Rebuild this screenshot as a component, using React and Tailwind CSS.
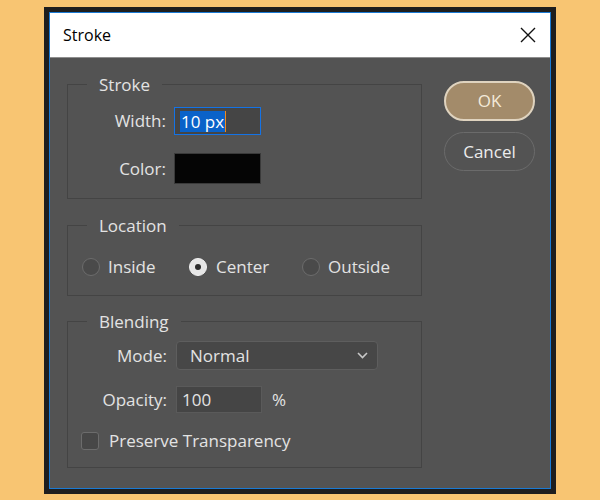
import React from 'react';

const font = { fontFamily: '"Open Sans", "Noto Sans", sans-serif' };

function Radio({ checked }) {
  return checked ? (
    <span className="flex items-center justify-center w-[18px] h-[18px] rounded-full bg-[#e6e6e6] border border-[#f2f2f2]">
      <span className="w-[6px] h-[6px] rounded-full bg-[#2b2b2b]" />
    </span>
  ) : (
    <span className="w-[18px] h-[18px] rounded-full bg-[#4a4a4a] border-[1.5px] border-[#6c6c6c]" />
  );
}

export default function App() {
  return (
    <div className="w-[600px] h-[500px] bg-[#f8c572] pt-[7px] pl-[44px]" style={font}>
      {/* Dialog */}
      <div className="w-[512px] h-[487px] border-[5px] border-[#1e1e1e]">
        <div className="w-full h-full border border-[#1a7ad4] bg-[#535353] flex flex-col">
          {/* Title bar */}
          <div className="h-[45px] bg-white border-b border-[#8e8e8e] flex items-center justify-between pl-[13px] pr-[13px]">
            <span className="text-[16px] text-black leading-5">Stroke</span>
            <svg width="16" height="16" viewBox="0 0 16 16" className="mr-[1px]">
              <path d="M1 1 L15 15 M15 1 L1 15" stroke="#111" strokeWidth="1.4" fill="none" />
            </svg>
          </div>

          {/* Body */}
          <div className="flex flex-1 text-[#e3e3e3] text-[17px] leading-5">
            <div className="pl-[17px] pt-[15px] flex flex-col">
              {/* Stroke */}
              <fieldset className="w-[355px] border border-[#444444]">
                <legend className="ml-[19px] px-3 leading-5 pt-[2px]">Stroke</legend>
                <div className="h-[103px] pt-[12px] flex flex-col">
                  <div className="flex items-center h-[28px]">
                    <span className="w-[98px] text-right">Width:</span>
                    <div className="ml-[8px] w-[87px] h-[28px] border border-[#1473e6] bg-[#454545] flex items-center pl-[5px]">
                      <span className="bg-[#0a62c9] text-white px-[1px] leading-[21px]">10 px</span>
                      <span className="w-[1px] h-[21px] bg-[#f08a1c]" />
                    </div>
                  </div>
                  <div className="flex items-center h-[31px] mt-[18px]">
                    <span className="w-[98px] text-right">Color:</span>
                    <div className="ml-[8px] w-[87px] h-[31px] border border-[#3a3a3a] bg-[#050505]" />
                  </div>
                </div>
              </fieldset>

              {/* Location */}
              <fieldset className="w-[355px] border border-[#444444] mt-[15px]">
                <legend className="ml-[19px] px-3 leading-5 pt-[2px]">Location</legend>
                <div className="h-[59px] pt-[21px] pl-[14px] flex">
                  <div className="w-[107px] h-[20px] flex items-center gap-[8px]">
                    <Radio />
                    <span>Inside</span>
                  </div>
                  <div className="w-[113px] h-[20px] flex items-center gap-[9px]">
                    <Radio checked />
                    <span>Center</span>
                  </div>
                  <div className="h-[20px] flex items-center gap-[8px]">
                    <Radio />
                    <span>Outside</span>
                  </div>
                </div>
              </fieldset>

              {/* Blending */}
              <fieldset className="w-[355px] border border-[#444444] mt-[14px]">
                <legend className="ml-[19px] px-3 leading-5 pt-[2px]">Blending</legend>
                <div className="h-[135px] pt-[9px] flex flex-col">
                  <div className="flex items-center h-[29px]">
                    <span className="w-[99px] text-right">Mode:</span>
                    <div className="ml-[9px] w-[202px] h-[29px] rounded-[4px] border border-[#5e5e5e] bg-[#474747] flex items-center justify-between pl-[13px] pr-[9px]">
                      <span>Normal</span>
                      <svg width="11" height="7" viewBox="0 0 11 7">
                        <path d="M1 1 L5.5 5.5 L10 1" stroke="#c8c8c8" strokeWidth="1.6" fill="none" />
                      </svg>
                    </div>
                  </div>
                  <div className="flex items-center h-[27px] mt-[16px]">
                    <span className="w-[99px] text-right">Opacity:</span>
                    <div className="ml-[9px] w-[86px] h-[27px] border border-[#5a5a5a] bg-[#454545] flex items-center pl-[5px]">
                      <span>100</span>
                    </div>
                    <span className="ml-[10px]">%</span>
                  </div>
                  <div className="flex items-center h-[18px] mt-[19px] pl-[13px]">
                    <span className="w-[18px] h-[18px] rounded-[3px] border-[1.5px] border-[#6c6c6c] bg-[#474747]" />
                    <span className="ml-[10px]">Preserve Transparency</span>
                  </div>
                </div>
              </fieldset>
            </div>

            {/* Buttons */}
            <div className="ml-[22px] pt-[23px] flex flex-col">
              <button className="w-[91px] h-[40px] rounded-full bg-[#a38b6a] border-2 border-[#dfd3bf] text-[#f3ead9] text-[17px]">
                OK
              </button>
              <button className="w-[91px] h-[39px] mt-[11px] rounded-full border-[1.5px] border-[#6b6b6b] text-[#ececec] text-[17px]">
                Cancel
              </button>
            </div>
          </div>
        </div>
      </div>
    </div>
  );
}
